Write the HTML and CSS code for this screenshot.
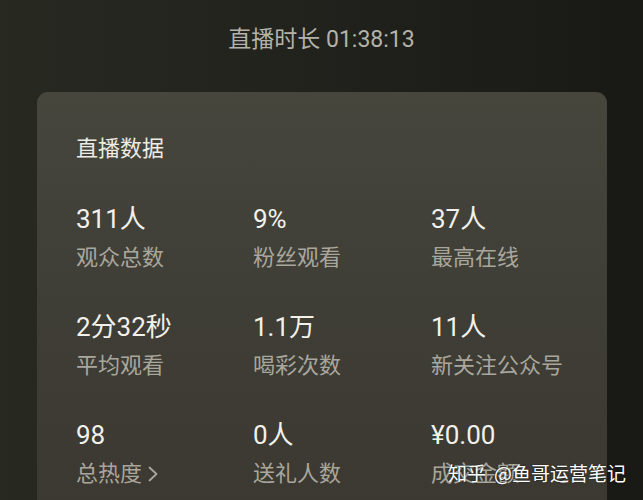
FILE: index.html
```html
<!DOCTYPE html>
<html lang="zh-CN">
<head>
<meta charset="utf-8">
<link rel="stylesheet" href="styles.css">
</head>
<body>
<div class="screen">
  <div class="duration">直播时长 01:38:13</div>
  <div class="card">
    <div class="card-title">直播数据</div>
    <div class="stats">
      <div class="stat"><div class="value">311人</div><div class="label">观众总数</div></div>
      <div class="stat"><div class="value">9%</div><div class="label">粉丝观看</div></div>
      <div class="stat"><div class="value">37人</div><div class="label">最高在线</div></div>
      <div class="stat"><div class="value">2分32秒</div><div class="label">平均观看</div></div>
      <div class="stat"><div class="value">1.1万</div><div class="label">喝彩次数</div></div>
      <div class="stat"><div class="value">11人</div><div class="label">新关注公众号</div></div>
      <div class="stat"><div class="value">98</div><div class="label">总热度<svg class="chev" width="12" height="18" viewBox="0 0 12 18"><path d="M2.5 2.5 L9.5 9 L2.5 15.5" fill="none" stroke="currentColor" stroke-width="1.8" stroke-linecap="round" stroke-linejoin="round"/></svg></div></div>
      <div class="stat"><div class="value">0人</div><div class="label">送礼人数</div></div>
      <div class="stat"><div class="value">¥0.00</div><div class="label">成交金额</div></div>
    </div>
  </div>
  <div class="watermark"><span class="wm-logo">知乎</span><span class="wm-name">@鱼哥运营笔记</span></div>
</div>
</body>
</html>
```

FILE: styles.css
```css
html, body {
  margin: 0;
  padding: 0;
}
body {
  width: 643px;
  height: 500px;
  overflow: hidden;
  font-family: Roboto, "Noto Sans CJK SC", "Noto Sans", sans-serif;
  background: #1f201b;
}
.screen {
  position: relative;
  width: 643px;
  height: 500px;
  overflow: hidden;
  background:
    linear-gradient(90deg, rgba(40,42,34,0.9) 0%, rgba(34,35,29,0.6) 50%, rgba(24,24,20,0.9) 100%),
    #1f201b;
  padding-top: 25px;
  box-sizing: border-box;
}
.duration {
  text-align: center;
  font-size: 23px;
  line-height: 30px;
  color: #b3b3aa;
}
.card {
  margin: 37px 0 0 37px;
  width: 570px;
  height: 500px;
  border-radius: 11px;
  background:
    linear-gradient(180deg, rgba(70,70,61,1) 0%, rgba(62,61,54,1) 45%, rgba(58,55,48,1) 100%);
  padding: 42px 0 0 39px;
  box-sizing: border-box;
}
.card-title {
  font-size: 22px;
  line-height: 30px;
  color: #ecebe4;
}
.stats {
  margin-top: 38px;
  display: grid;
  grid-template-columns: 177px 178px 1fr;
  row-gap: 37px;
}
.value {
  font-size: 26px;
  line-height: 34px;
  color: #f2f1eb;
}
.label {
  margin-top: 7px;
  font-size: 22px;
  line-height: 30px;
  color: #a9a79d;
  display: flex;
  align-items: center;
}
.chev {
  margin-left: 5px;
  color: #a9a79d;
}
.watermark {
  position: absolute;
  left: 448px;
  top: 458px;
  display: flex;
  gap: 8px;
  font-family: "Noto Sans CJK SC", sans-serif;
  font-size: 19px;
  line-height: 30px;
  color: #ffffff;
  text-shadow: 0 0 2px rgba(0,0,0,0.5);
}
```
